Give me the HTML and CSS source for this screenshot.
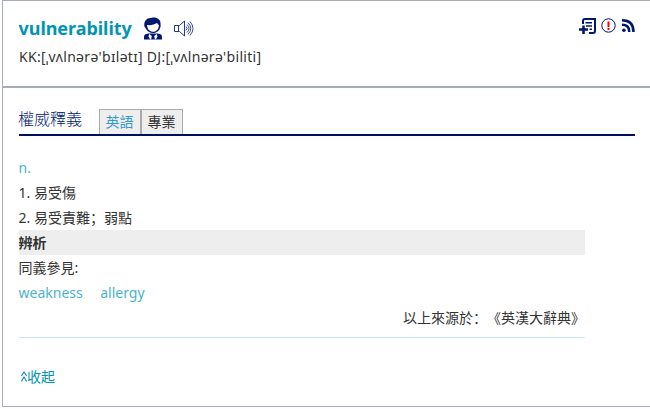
FILE: index.html
```html
<!DOCTYPE html>
<html lang="zh-Hant">
<head>
<meta charset="utf-8">
<title>vulnerability</title>
<link rel="stylesheet" href="styles.css">
</head>
<body>
<main class="card">
  <header class="head">
    <div class="title-row">
      <h1 class="word">vulnerability</h1>
      <svg class="person" width="20" height="24" viewBox="0 0 20 24">
        <path fill="#001970" d="M2.500 11C.5 9 1 5 3 3C4.500 .8 7 1 9 .7C13 .1 17.500 2 17.500 6C17.500 8 18 10 17 11C16 14.500 13 16 10 16S4 14.500 2.500 11Z"/>
        <path fill="#fff" d="M4 8C8 8.500 11.500 7.500 14 6L16 8.500C15.500 12.500 13 14.800 10 14.800S4.300 12.500 4 8Z"/>
        <path fill="#001970" d="M1 22.500V19.500Q1 17.500 3 17L6 16.500H14L17 17Q19 17.500 19 19.500V22.500Z"/>
        <path fill="#fff" d="M6.300 17L8.800 19L8.100 22.500H7.200L5.500 19.500ZM13.700 17L11.200 19L11.900 22.500H12.800L14.500 19.500Z"/>
      </svg>
      <svg class="speaker" width="20" height="17" viewBox="0 0 20 17" fill="none" stroke="#26388a">
        <path d="M.5 5.500H5.500L10.500 1V16L5.500 11.500H.5ZM4.500 5.500V11.500"/>
        <path stroke-width=".9" d="M12 6.500Q14 8.500 12 10.500M13 4.500Q17 8.500 13 12.500M14 2.600Q19.500 8.500 14 14.400M16 1.500Q22 8.500 16 15.500"/>
      </svg>
      <div class="tools">
        <svg width="17" height="17" viewBox="0 0 17 17" fill="none" stroke="#001970">
          <path stroke-width="2" d="M4 6V3Q4 1 6 1H16V13Q16 15 14 15H10"/>
          <path stroke-width="2.600" d="M0 11.500H9M4.500 7.500V16"/>
          <path stroke-width="1.500" d="M6.500 4.700H13M7 8H13M10.500 11.300H13"/>
        </svg>
        <svg class="alert" width="15" height="15" viewBox="0 0 15 15">
          <circle cx="7.500" cy="7.500" r="6.700" fill="#fff" stroke="#001970"/>
          <path fill="#f00" d="M6.500 3.500H8.500V9H6.500ZM6.500 10H8.500V12H6.500Z"/>
        </svg>
        <svg class="feed" width="13" height="13" viewBox="0 0 13 13" fill="none" stroke="#001970" stroke-width="2.600">
          <path d="M0 1.300Q11.500 1.300 11.500 13M0 5.700Q7.300 5.700 7.300 13"/>
          <circle cx="1.900" cy="11.200" r="1.800" fill="#001970" stroke="none"/>
        </svg>
      </div>
    </div>
    <div class="phonetic">KK:[ˌvʌlnərə'bɪlətɪ] DJ:[ˌvʌlnərə'biliti]</div>
  </header>
  <section class="body">
    <nav class="tabs">
      <h2 class="section-title">權威釋義</h2>
      <span class="tab active">英語</span><span class="tab">專業</span>
    </nav>
    <div class="entry">
      <div class="line pos">n.</div>
      <div class="line">1. 易受傷</div>
      <div class="line">2. 易受責難<span class="mark" lang="zh-Hans">；</span>弱點</div>
      <div class="line analysis">辨析</div>
      <div class="line">同義參見:</div>
      <div class="line synonyms"><a>weakness</a><a>allergy</a></div>
      <div class="line source">以上來源於<span class="mark" lang="zh-Hans">：</span>《英漢大辭典》</div>
    </div>
    <div class="collapse">
      <svg width="6" height="12" viewBox="0 0 6 12" fill="none" stroke="#0095b3" stroke-width="1.100"><path d="M.4 5L3 1L5.600 5M.4 10.500L3 6L5.600 10.500"/></svg><span>收起</span>
    </div>
  </section>
</main>
</body>
</html>
```
FILE: styles.css
```css
* { box-sizing: border-box; }
body {
  margin: 0;
  background: #fff;
  color: #333;
  font: 14px/25px "Noto Sans", "Noto Sans CJK TC", sans-serif;
  text-spacing-trim: space-all;
  overflow: hidden;
}
.card {
  margin-left: 2px;
  height: 407px;
  border: 1px solid #a6abbe;
  border-right: 0;
}
.head {
  height: 87px;
  padding: 15px 15px 0 16px;
  border-bottom: 2px solid #a6abbe;
}
.title-row { display: flex; height: 26px; }
.word {
  margin: 0;
  width: 113px;
  color: #0095b3;
  font-size: 18px;
  line-height: 25px;
  letter-spacing: -.05px;
  text-indent: -.5px;
  white-space: nowrap;
}
.person { margin: 1px 0 0 11px; }
.speaker { margin: 4px 0 0 11px; }
.tools { display: flex; margin: 2px 0 0 auto; }
.alert { margin: 0 0 0 5px; }
.feed { margin: 1px 0 0 6px; }
.phonetic { margin-top: 2px; letter-spacing: .3px; white-space: nowrap; }
.body { padding: 21px 15px 0 16px; }
.tabs {
  display: flex;
  height: 27px;
  border-bottom: 2px solid #001060;
}
.section-title {
  margin: -3px 17px 0 0;
  color: #001970;
  font-size: 16px;
  line-height: 26px;
  font-weight: 300;
  text-indent: -1px;
}
.tab {
  width: 42px;
  height: 25px;
  border: 1px solid #aaa;
  border-bottom: 0;
  background: #eee;
  text-align: center;
  line-height: 23px;
  text-indent: -1px;
}
.active { color: #3399cc; }
.entry {
  width: 566px;
  height: 202px;
  padding-top: 19px;
  border-bottom: 1px solid #c9e4f2;
}
.line { height: 25px; white-space: nowrap; text-indent: -.5px; }
.pos, .synonyms { color: #49b6c9; }
.analysis { background: #eee; font-weight: 700; }
.synonyms { display: flex; gap: 18px; }
.source { text-align: right; }
.mark { font-family: "Noto Sans CJK SC", sans-serif; }
.collapse {
  display: flex;
  align-items: center;
  height: 25px;
  margin: 26px 0 0 2px;
  color: #0095b3;
}
```
